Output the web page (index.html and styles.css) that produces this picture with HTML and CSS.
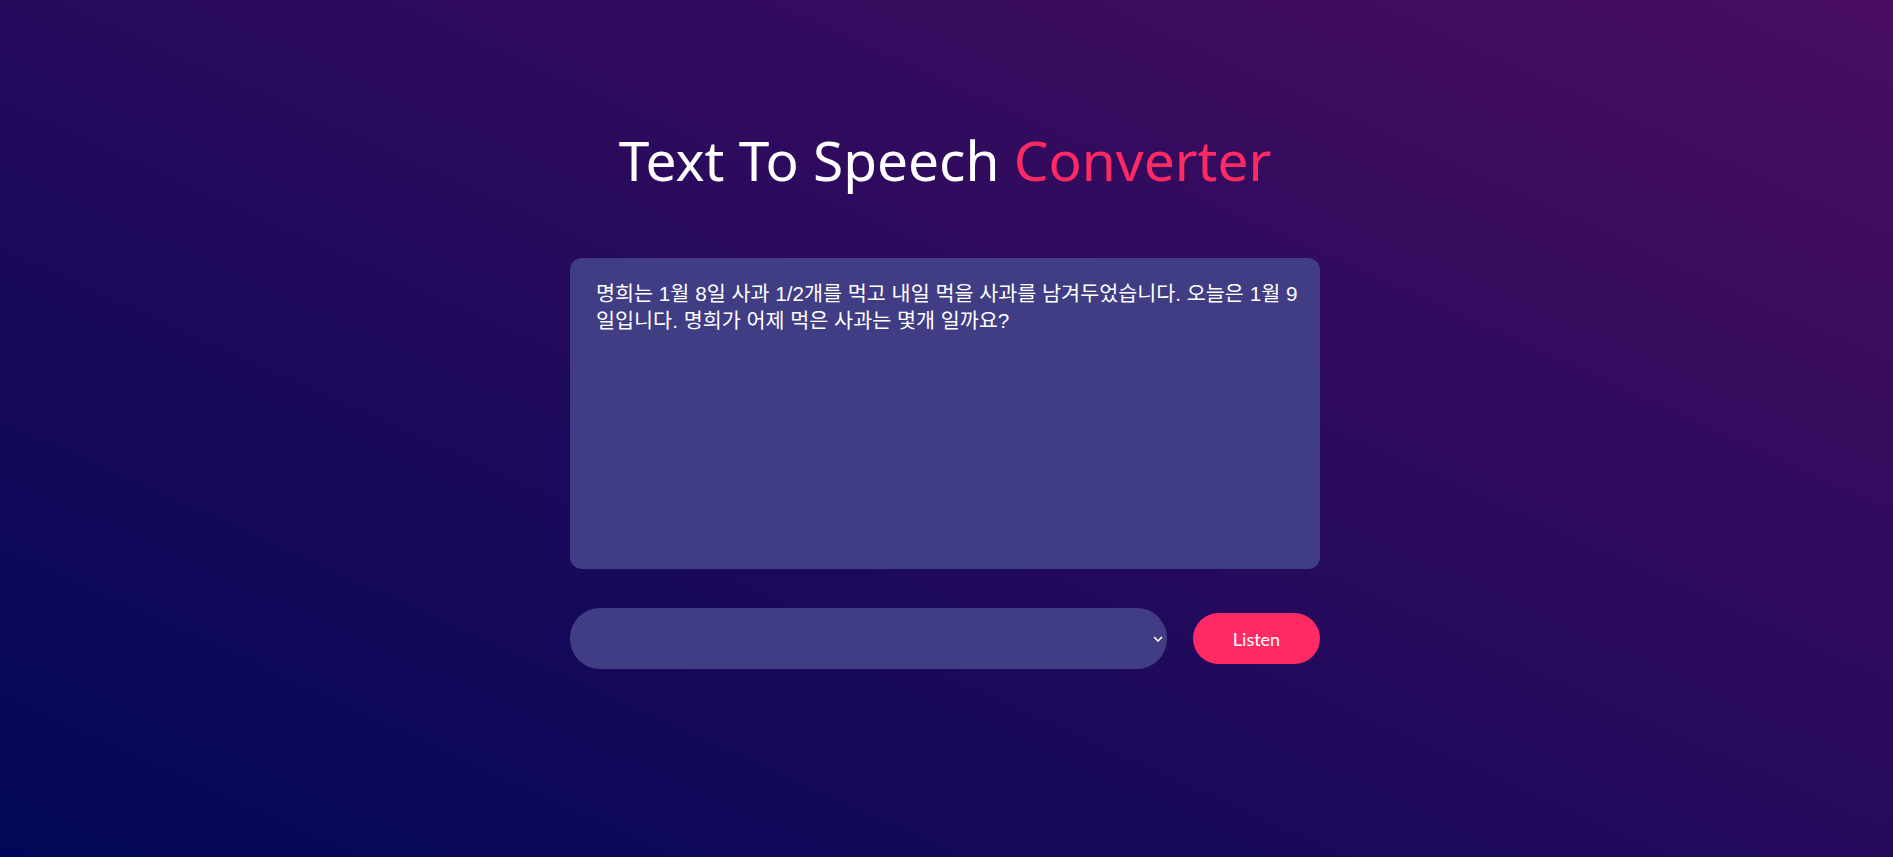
FILE: index.html
```html
<!DOCTYPE html>
<html lang="ko">
<head>
<meta charset="utf-8">
<title>Text To Speech Converter</title>
<link rel="stylesheet" href="styles.css">
</head>
<body>
<main class="page">
  <h1 class="title">Text To Speech <span class="accent">Converter</span></h1>
  <section class="panel">
    <textarea class="text-input">명희는 1월 8일 사과 1/2개를 먹고 내일 먹을 사과를 남겨두었습니다. 오늘은 1월 9일입니다. 명희가 어제 먹은 사과는 몇개 일까요?</textarea>
    <div class="controls">
      <div class="select-wrap">
        <select class="voice-select"><option></option></select>
        <svg class="chev" viewBox="0 0 10 6" width="10" height="6"><path d="M1 1l4 4 4-4" fill="none" stroke="#fff" stroke-width="1.6"/></svg>
      </div>
      <button class="listen">Listen</button>
    </div>
  </section>
</main>
</body>
</html>
```
FILE: styles.css
```css
* { box-sizing: border-box; margin: 0; padding: 0; }
html, body { height: 100%; }
body {
  background: linear-gradient(to right top, #010758, #490d61);
  font-family: "Noto Sans", "Noto Sans CJK KR", sans-serif;
  color: #fff;
  overflow: hidden;
}
.page {
  display: flex;
  flex-direction: column;
  align-items: center;
  padding-top: 122px;
  padding-right: 3px;
}
.title {
  font-weight: 400;
  font-size: 55px;
  line-height: 76px;
  letter-spacing: 0;
  color: #fff;
}
.accent { color: #ff2963; }
.panel {
  width: 750px;
  margin-top: 60px;
  display: flex;
  flex-direction: column;
  gap: 39px;
}
.text-input {
  width: 100%;
  height: 311px;
  background: #403d84;
  border: none;
  outline: none;
  border-radius: 12px;
  padding: 22px 20px 22px 26px;
  color: #fff;
  font-family: "Liberation Sans", "Noto Sans CJK KR", sans-serif;
  font-size: 20.7px;
  line-height: 27px;
  resize: none;
}
.controls {
  display: flex;
  align-items: center;
  gap: 26px;
}
.select-wrap {
  position: relative;
  flex: 0 0 597px;
  height: 61px;
}
.voice-select {
  appearance: none;
  -webkit-appearance: none;
  width: 100%;
  height: 100%;
  background: #403d84;
  border: none;
  outline: none;
  border-radius: 30px;
  color: #fff;
  padding: 0 20px;
  font-size: 16px;
}
.chev {
  position: absolute;
  right: 4px;
  top: 28px;
  pointer-events: none;
}
.listen {
  flex: 0 0 127px;
  height: 51px;
  background: #ff2963;
  border: none;
  border-radius: 26px;
  color: #fff;
  font-family: "Lato", sans-serif;
  font-size: 18px;
  cursor: pointer;
}
```
